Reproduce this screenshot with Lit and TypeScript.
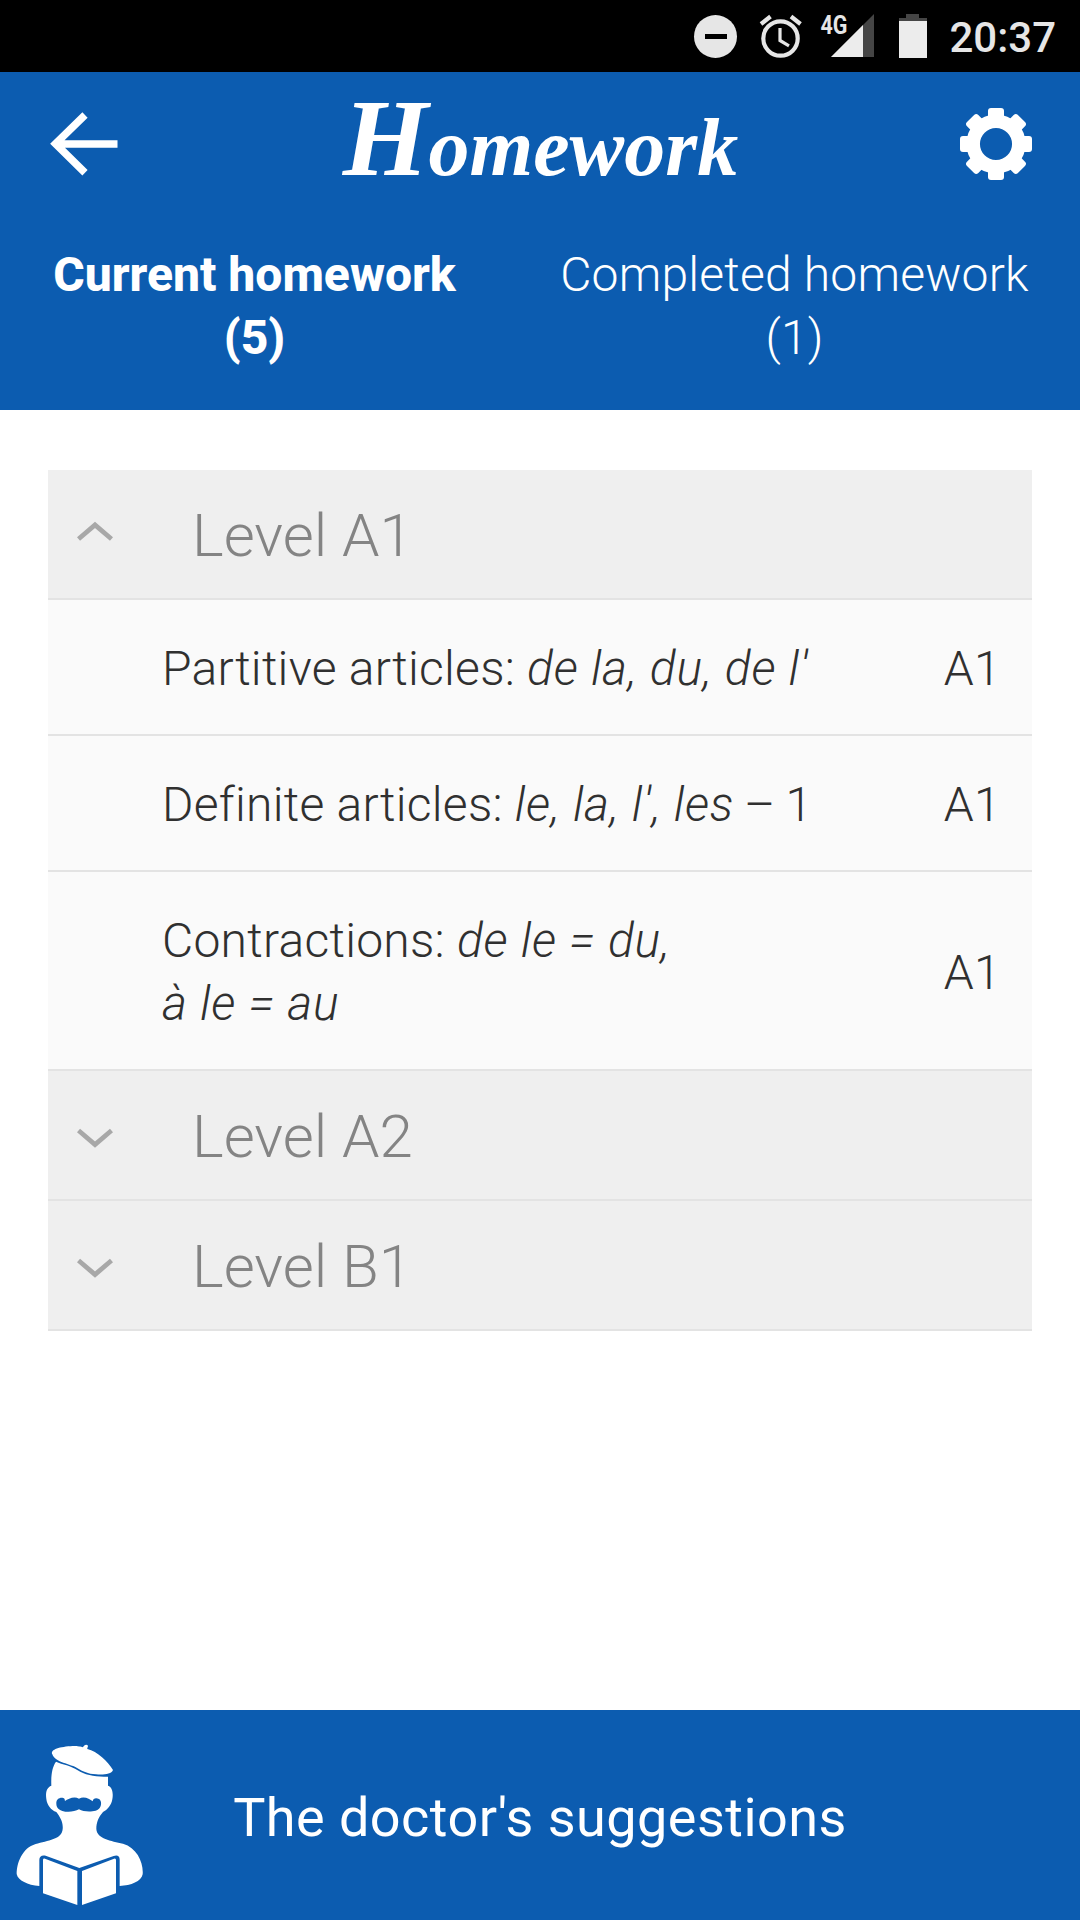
import { LitElement, html, css, svg, nothing } from "lit";
import { customElement, property, state } from "lit/decorators.js";

interface Lesson {
  title: string;
  terms: unknown;
  suffix?: string;
  level: string;
}

interface Level {
  name: string;
  lessons: Lesson[];
}

const LEVELS: Level[] = [
  {
    name: "Level A1",
    lessons: [
      { title: "Partitive articles:", terms: "de la, du, de l'", level: "A1" },
      { title: "Definite articles:", terms: "le, la, l', les", suffix: "– 1", level: "A1" },
      { title: "Contractions:", terms: html`de le = du,<br />à le = au`, level: "A1" },
    ],
  },
  { name: "Level A2", lessons: [] },
  { name: "Level B1", lessons: [] },
];

@customElement("status-bar")
class StatusBar extends LitElement {
  static styles = css`
    :host {
      display: flex;
      align-items: center;
      justify-content: flex-end;
      height: 72px;
      box-sizing: border-box;
      padding-right: 24px;
      background: #000;
      color: #e6e6e6;
    }
    .clock {
      margin-left: 22px;
      font-size: 42px;
      line-height: 72px;
      padding-top: 2px;
      height: 72px;
      box-sizing: border-box;
      font-weight: 480;
    }
    .network {
      font: 700 26px Roboto, sans-serif;
    }
  `;

  render() {
    return html`
      <svg width="235" height="72" viewBox="692 0 235 72" fill="#e6e6e6">
        <circle cx="715.5" cy="36.5" r="21.5" />
        <rect x="705" y="34" width="22" height="5" fill="#000" />
        <circle cx="780.5" cy="38.5" r="17.2" fill="none" stroke="#e6e6e6" stroke-width="4.2" />
        <path d="M780 28v12.500l9 5.300" fill="none" stroke="#e6e6e6" stroke-width="3.200" />
        <path d="M761 24l9.500-7.500M791 16.500l9.500 7.500" fill="none" stroke="#e6e6e6" stroke-width="4.200" />
        <path d="M874 14v43h-43z" fill="#454545" />
        <path d="M863 25v32h-32z" fill="#ececec" />
        <text class="network" x="820.5" y="33.500" textLength="27" lengthAdjust="spacingAndGlyphs">4G</text>
        <path d="M899 21v-3h7v-4h13v4h8v3z" fill="#454545" />
        <rect x="899" y="21" width="28" height="37" fill="#ececec" />
      </svg>
      <div class="clock">20:37</div>
    `;
  }
}

@customElement("homework-header")
class HomeworkHeader extends LitElement {
  static styles = css`
    :host {
      display: flex;
      flex-direction: column;
      height: 338px;
      background: #0c5cb0;
      color: #fff;
    }
    .bar {
      display: flex;
      align-items: center;
      justify-content: space-between;
      height: 144px;
      padding: 0 48px 0 50px;
    }
    .bar svg {
      display: block;
    }
    .title {
      align-self: flex-start;
      padding: 1px 0 0 3px;
      font: italic 700 82px/130px "Liberation Serif", serif;
      white-space: nowrap;
    }
    .initial {
      font-size: 110px;
    }
    .tabs {
      display: grid;
      grid-template-columns: 1fr 1fr;
      padding: 27px 0 0;
      text-align: center;
    }
    .tab {
      padding-right: 31px;
      font-size: 48px;
      line-height: 63px;
      font-weight: 300;
      letter-spacing: 0.2px;
      white-space: nowrap;
    }
    .current {
      font-weight: 800;
      letter-spacing: 0;
    }
  `;

  render() {
    const teeth = [0, 45, 90, 135, 180, 225, 270, 315];
    return html`
      <div class="bar">
        <svg width="68" height="64" viewBox="50 112 68 64">
          <path d="M85 115L55.500 143.800L85 172.700M57 144h60.500" fill="none" stroke="#fff" stroke-width="7.500" />
        </svg>
        <div class="title"><span class="initial">H</span>omework</div>
        <svg width="72" height="72" viewBox="-36 -36 72 72" fill="#fff">
          <circle r="22.800" fill="none" stroke="#fff" stroke-width="13.500" />
          ${teeth.map((a) => svg`<rect x="-8" y="-36" width="16" height="14" rx="3" transform="rotate(${a})" />`)}
        </svg>
      </div>
      <div class="tabs">
        <div class="tab current">Current homework<br />(5)</div>
        <div class="tab">Completed homework<br />(1)</div>
      </div>
    `;
  }
}

@customElement("level-section")
class LevelSection extends LitElement {
  @property({ attribute: false }) level!: Level;
  @property({ type: Boolean }) open = false;

  static styles = css`
    :host {
      display: block;
    }
    .head {
      display: flex;
      align-items: center;
      height: 130px;
      box-sizing: border-box;
      padding-top: 2px;
      border-bottom: 2px solid #e3e3e3;
      background: #efefef;
      color: #848484;
      font-size: 60px;
      font-weight: 300;
      cursor: pointer;
    }
    .chevron {
      width: 36px;
      height: 28px;
      margin: 0 79px 0 29px;
    }
    .row {
      display: flex;
      align-items: center;
      justify-content: space-between;
      box-sizing: border-box;
      padding: 37px 31px 34px 114px;
      border-bottom: 2px solid #e3e3e3;
      background: #fafafa;
      color: #303030;
      font-size: 48px;
      line-height: 63px;
      font-weight: 300;
      letter-spacing: 0.26px;
    }
    .terms {
      letter-spacing: 0.75px;
    }
    .suffix {
      word-spacing: -2px;
    }
  `;

  private toggle() {
    this.dispatchEvent(new CustomEvent("toggle-level"));
  }

  render() {
    return html`
      <div class="head" @click=${this.toggle}>
        <svg class="chevron" viewBox="0 0 36 28">
          <path d=${this.open ? "M1.500 18L18 4L34.500 18" : "M1.500 8.500L18 22.500L34.500 8.500"} fill="none" stroke="#a8a8a8" stroke-width="4.800" />
        </svg>
        <span>${this.level.name}</span>
      </div>
      ${this.open
        ? this.level.lessons.map(
            (l) => html`<div class="row">
              <div>${l.title} <i class="terms">${l.terms}</i>${l.suffix ? html`<span class="suffix"> ${l.suffix}</span>` : nothing}</div>
              <div>${l.level}</div>
            </div>`
          )
        : nothing}
    `;
  }
}

@customElement("suggestions-bar")
class SuggestionsBar extends LitElement {
  static styles = css`
    :host {
      display: grid;
      grid-template-columns: 160px 1fr 160px;
      align-items: center;
      height: 210px;
      background: #0c5cb0;
      color: #fff;
      font-size: 54px;
      text-align: center;
    }
    svg {
      display: block;
    }
    .label {
      padding-top: 4px;
      font-weight: 440;
      letter-spacing: 0.45px;
    }
  `;

  render() {
    return html`
      <svg width="160" height="210" viewBox="0 -30 480 630" fill="#fff">
        <path d="M157 103C150 88 180 80 218 78C235 78 242 80 249 82C252 74 260 72 264 77C264 81 261 84 262 87C292 94 324 125 339 150C334 163 310 165 288 163C263 161 249 154 235 146C211 131 165 128 157 103Z" />
        <path d="M168 125C187 134 213 136 233 151C255 166 290 172 324 170V197C338 201 340 221 337 238C334 256 322 270 309 276C296 291 289 307 289 327C291 357 333 363 369 371C411 383 431 428 428 463C424 484 393 497 359 498V419C359 407 351 404 341 408L238 444L139 408C126 404 118 409 118 420V498C83 495 54 482 50 462C50 430 66 384 107 372C143 362 186 358 188 327C190 307 181 292 169 276C153 271 141 255 139 237C136 218 140 202 154 197C153 170 155 143 168 125Z" />
        <path fill="#0c5cb0" d="M169 251C168 237 180 231 190 234C195 236 194 240 195 243C204 237 222 228 237 236C252 227 269 237 278 244C279 235 288 232 297 237C306 243 304 257 299 264C291 277 254 278 237 268C220 278 185 278 175 266C171 262 169 257 169 251Z" />
        <path d="M129 420Q129 415 135 416L232 453V555L129 520ZM246 453L342 416Q348 414 348 420V520L246 555Z" />
      </svg>
      <div class="label">The doctor's suggestions</div>
    `;
  }
}

@customElement("app-root")
class AppRoot extends LitElement {
  @state() private openIndex = 0;

  static styles = css`
    :host {
      display: flex;
      flex-direction: column;
      width: 1080px;
      height: 1920px;
      background: #fff;
      font-family: Roboto, sans-serif;
    }
    .levels {
      flex: 1;
      padding: 60px 48px 0;
    }
  `;

  render() {
    return html`
      <status-bar></status-bar>
      <homework-header></homework-header>
      <div class="levels">
        ${LEVELS.map(
          (level, i) => html`<level-section
            .level=${level}
            .open=${i === this.openIndex}
            @toggle-level=${() => (this.openIndex = this.openIndex === i ? -1 : i)}
          ></level-section>`
        )}
      </div>
      <suggestions-bar></suggestions-bar>
    `;
  }
}
